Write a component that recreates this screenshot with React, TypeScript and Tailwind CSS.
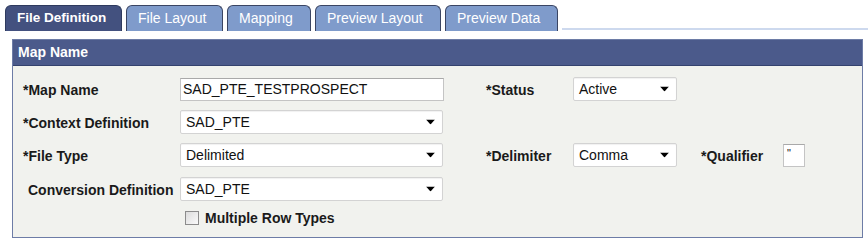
import React from "react";

const font = { fontFamily: '"Liberation Sans", Arial, sans-serif' };

function Arrow() {
  return (
    <svg width="9" height="5" viewBox="0 0 9 5" className="absolute right-[7px] top-1/2 -translate-y-1/2">
      <path d="M0 0 L9 0 L4.5 5 Z" fill="#000" />
    </svg>
  );
}

function Select({ value, w }: { value: string; w: string }) {
  return (
    <div
      className={`relative ${w} h-[24px] bg-white border border-[#d3d3d3] rounded-[2px] shadow-[inset_0_1px_1px_rgba(0,0,0,0.06)] flex items-center pl-[5px] text-[14px] text-[#111]`}
    >
      {value}
      <Arrow />
    </div>
  );
}

function Label({ children, w, extra = "" }: { children: React.ReactNode; w: string; extra?: string }) {
  return <div className={`${w} ${extra} shrink-0 font-bold text-[14px] text-[#1a1a1a] pt-[2px]`}>{children}</div>;
}

export default function App() {
  const tabs = [
    { t: "File Definition", w: "w-[117px]", active: true },
    { t: "File Layout", w: "w-[97px]" },
    { t: "Mapping", w: "w-[84px]" },
    { t: "Preview Layout", w: "w-[126px]" },
    { t: "Preview Data", w: "w-[113px]" },
  ];
  return (
    <div style={font} className="w-[868px] h-[243px] bg-white overflow-hidden">
      <div className="flex items-end h-[31px] pl-[5px] gap-[4px]">
        {tabs.map((tab) =>
          tab.active ? (
            <div
              key={tab.t}
              className={`${tab.w} h-[26px] rounded-t-[6px] border border-b-0 border-[#2e3a5e] bg-[#43517f] text-white font-bold text-[13.5px] flex items-center pl-[11px]`}
            >
              {tab.t}
            </div>
          ) : (
            <div
              key={tab.t}
              className={`${tab.w} h-[26px] rounded-t-[6px] border border-b-0 border-[#3a4563] bg-[#7f9bcb] text-white text-[14px] flex items-center pl-[11px]`}
            >
              {tab.t}
            </div>
          )
        )}
        <div className="flex-1 h-[2px] mb-[1px] bg-[#cdd9ee]" />
      </div>

      <div className="ml-[12px] mt-[8px] w-[851px] h-[199px] border border-[#6d7ca6] bg-[#f1f2ee] flex flex-col">
        <div className="h-[26px] bg-[#4b5a8b] border-b border-[#34426e] flex items-center pl-[5px] text-white font-bold text-[14px]">
          Map Name
        </div>

        <div className="flex flex-col pl-[10px]">
          <div className="flex items-center h-[24px] mt-[11px]">
            <Label w="w-[157px]">*Map Name</Label>
            <div className="w-[264px] h-[23px] bg-white border border-[#c4c4c4] border-t-[#a9a9a9] flex items-center pl-[2px] text-[14px] text-[#111]">
              SAD_PTE_TESTPROSPECT
            </div>
            <div className="w-[42px]" />
            <Label w="w-[87px]">*Status</Label>
            <Select value="Active" w="w-[104px]" />
          </div>

          <div className="flex items-center h-[24px] mt-[9px]">
            <Label w="w-[157px]">*Context Definition</Label>
            <Select value="SAD_PTE" w="w-[263px]" />
          </div>

          <div className="flex items-center h-[24px] mt-[9px]">
            <Label w="w-[157px]">*File Type</Label>
            <Select value="Delimited" w="w-[263px]" />
            <div className="w-[43px]" />
            <Label w="w-[87px]">*Delimiter</Label>
            <Select value="Comma" w="w-[104px]" />
            <div className="w-[24px]" />
            <Label w="w-[82px]">*Qualifier</Label>
            <div className="w-[22px] h-[23px] bg-white border border-[#c4c4c4] border-t-[#a9a9a9] text-[11px] leading-none pl-[3px] pt-[3px] text-[#111]">
              "
            </div>
          </div>

          <div className="flex items-center h-[24px] mt-[10px]">
            <Label w="w-[157px]" extra="pl-[5px] whitespace-nowrap">Conversion Definition</Label>
            <Select value="SAD_PTE" w="w-[263px]" />
          </div>

          <div className="flex items-center h-[20px] mt-[7px] pl-[162px]">
            <div className="w-[14px] h-[14px] border border-[#8c8c8c] bg-gradient-to-br from-[#dcdcdc] to-[#fafafa] mr-[6px]" />
            <span className="font-bold text-[14px] text-[#1a1a1a]">Multiple Row Types</span>
          </div>
        </div>
      </div>
    </div>
  );
}
